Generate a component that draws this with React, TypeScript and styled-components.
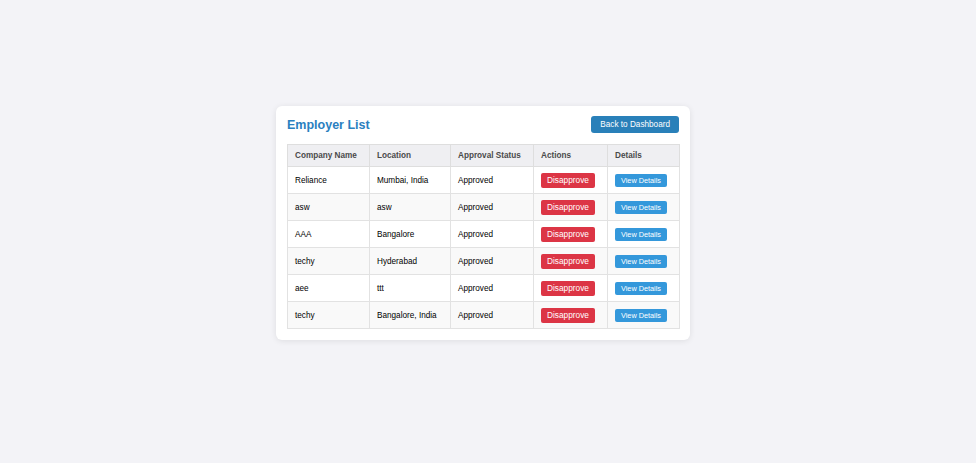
import React from "react";
import styled, { createGlobalStyle } from "styled-components";

const Global = createGlobalStyle`
  html, body { margin: 0; padding: 0; background: #f3f3f7; }
  body { font-family: "Liberation Sans", Arial, sans-serif; }
`;

const Page = styled.div`
  min-height: 463px;
  box-sizing: border-box;
  padding: 106px 0 0 276px;
`;

const Card = styled.div`
  width: 414px;
  box-sizing: border-box;
  background: #ffffff;
  border-radius: 6px;
  box-shadow: 0 1px 6px rgba(0, 0, 0, 0.09);
  padding: 10px 11px 11px 11px;
`;

const Header = styled.div`
  display: flex;
  align-items: center;
  justify-content: space-between;
  height: 17px;
  margin-bottom: 11px;
`;

const Title = styled.h2`
  margin: 0;
  font-size: 12.5px;
  font-weight: bold;
  color: #2a80c0;
  line-height: 17px;
  padding-top: 1px;
`;

const BackButton = styled.button`
  height: 17px;
  padding: 0 9px;
  border: none;
  border-radius: 3px;
  background: #2980b9;
  color: #fff;
  font-family: "Liberation Sans", Arial, sans-serif;
  font-size: 8.2px;
  line-height: 17px;
  cursor: pointer;
`;

const Table = styled.table`
  width: 392px;
  border-collapse: collapse;
  table-layout: fixed;
`;

const Th = styled.th<{ $w: number }>`
  width: ${(p) => p.$w}px;
  height: 22px;
  box-sizing: border-box;
  padding: 0 7px;
  text-align: left;
  background: #efeff2;
  color: #4a4a4a;
  font-size: 8.2px;
  font-weight: bold;
  border: 1px solid #dedede;
`;

const Tr = styled.tr<{ $alt: boolean }>`
  background: ${(p) => (p.$alt ? "#f9f9f9" : "#ffffff")};
`;

const Td = styled.td`
  height: 27px;
  box-sizing: border-box;
  padding: 0 7px;
  font-size: 8.2px;
  color: #000;
  border: 1px solid #e2e2e2;
  vertical-align: middle;
`;

const DisapproveButton = styled.button`
  height: 15px;
  padding: 0 6px;
  border: none;
  border-radius: 2px;
  background: #dc3545;
  color: #fff;
  font-family: "Liberation Sans", Arial, sans-serif;
  font-size: 8.3px;
  line-height: 15px;
  display: block;
`;

const DetailsButton = styled.button`
  height: 13px;
  padding: 0 6px;
  border: none;
  border-radius: 2px;
  background: #3498db;
  color: #fff;
  font-family: "Liberation Sans", Arial, sans-serif;
  font-size: 7.3px;
  line-height: 13px;
  display: block;
`;

const rows = [
  { company: "Reliance", location: "Mumbai, India" },
  { company: "asw", location: "asw" },
  { company: "AAA", location: "Bangalore" },
  { company: "techy", location: "Hyderabad" },
  { company: "aee", location: "ttt" },
  { company: "techy", location: "Bangalore, India" },
];

const columns: [string, number][] = [
  ["Company Name", 82],
  ["Location", 81],
  ["Approval Status", 83],
  ["Actions", 74],
  ["Details", 72],
];

export default function App() {
  return (
    <>
      <Global />
      <Page>
        <Card>
          <Header>
            <Title>Employer List</Title>
            <BackButton>Back to Dashboard</BackButton>
          </Header>
          <Table>
            <thead>
              <tr>
                {columns.map(([label, w]) => (
                  <Th key={label} $w={w}>
                    {label}
                  </Th>
                ))}
              </tr>
            </thead>
            <tbody>
              {rows.map((r, i) => (
                <Tr key={i} $alt={i % 2 === 1}>
                  <Td>{r.company}</Td>
                  <Td>{r.location}</Td>
                  <Td>Approved</Td>
                  <Td>
                    <DisapproveButton>Disapprove</DisapproveButton>
                  </Td>
                  <Td>
                    <DetailsButton>View Details</DetailsButton>
                  </Td>
                </Tr>
              ))}
            </tbody>
          </Table>
        </Card>
      </Page>
    </>
  );
}
